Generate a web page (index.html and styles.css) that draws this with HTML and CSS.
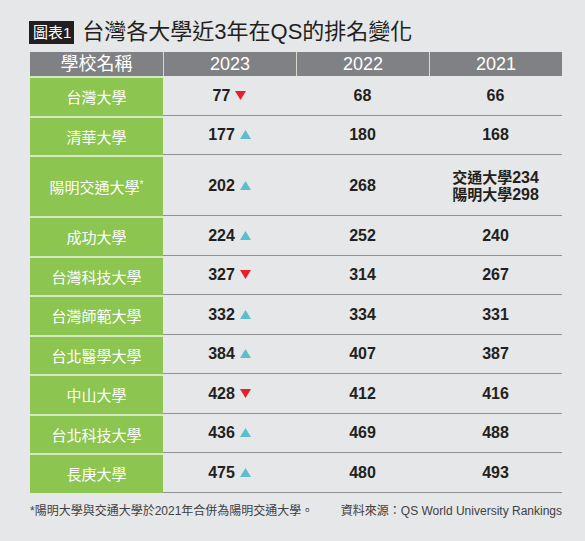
FILE: index.html
```html
<!DOCTYPE html>
<html lang="zh-Hant">
<head>
<meta charset="utf-8">
<link rel="stylesheet" href="styles.css">
</head>
<body>
<div class="page">
  <div class="title">
    <span class="tag">圖表1</span>
    <h1 class="heading">台灣各大學近3年在QS的排名變化</h1>
  </div>
  <div class="table">
    <div class="row head">
      <div class="hcell">學校名稱</div>
      <div class="hcell">2023</div>
      <div class="hcell">2022</div>
      <div class="hcell">2021</div>
    </div>
    <div class="row">
      <div class="name">台灣大學</div>
      <div class="cell">77<svg class="tri" viewBox="0 0 11 9"><polygon class="down" points="0,0 11,0 5.5,9"/></svg></div>
      <div class="cell">68</div>
      <div class="cell">66</div>
    </div>
    <div class="row">
      <div class="name">清華大學</div>
      <div class="cell">177<svg class="tri" viewBox="0 0 11 9"><polygon class="up" points="5.5,0 11,9 0,9"/></svg></div>
      <div class="cell">180</div>
      <div class="cell">168</div>
    </div>
    <div class="row tall">
      <div class="name">陽明交通大學<sup class="star">*</sup></div>
      <div class="cell">202<svg class="tri" viewBox="0 0 11 9"><polygon class="up" points="5.5,0 11,9 0,9"/></svg></div>
      <div class="cell">268</div>
      <div class="cell multi"><span>交通大學<span class="num">234</span></span><span>陽明大學<span class="num">298</span></span></div>
    </div>
    <div class="row">
      <div class="name">成功大學</div>
      <div class="cell">224<svg class="tri" viewBox="0 0 11 9"><polygon class="up" points="5.5,0 11,9 0,9"/></svg></div>
      <div class="cell">252</div>
      <div class="cell">240</div>
    </div>
    <div class="row">
      <div class="name">台灣科技大學</div>
      <div class="cell">327<svg class="tri" viewBox="0 0 11 9"><polygon class="down" points="0,0 11,0 5.5,9"/></svg></div>
      <div class="cell">314</div>
      <div class="cell">267</div>
    </div>
    <div class="row">
      <div class="name">台灣師範大學</div>
      <div class="cell">332<svg class="tri" viewBox="0 0 11 9"><polygon class="up" points="5.5,0 11,9 0,9"/></svg></div>
      <div class="cell">334</div>
      <div class="cell">331</div>
    </div>
    <div class="row">
      <div class="name">台北醫學大學</div>
      <div class="cell">384<svg class="tri" viewBox="0 0 11 9"><polygon class="up" points="5.5,0 11,9 0,9"/></svg></div>
      <div class="cell">407</div>
      <div class="cell">387</div>
    </div>
    <div class="row">
      <div class="name">中山大學</div>
      <div class="cell">428<svg class="tri" viewBox="0 0 11 9"><polygon class="down" points="0,0 11,0 5.5,9"/></svg></div>
      <div class="cell">412</div>
      <div class="cell">416</div>
    </div>
    <div class="row">
      <div class="name">台北科技大學</div>
      <div class="cell">436<svg class="tri" viewBox="0 0 11 9"><polygon class="up" points="5.5,0 11,9 0,9"/></svg></div>
      <div class="cell">469</div>
      <div class="cell">488</div>
    </div>
    <div class="row">
      <div class="name">長庚大學</div>
      <div class="cell">475<svg class="tri" viewBox="0 0 11 9"><polygon class="up" points="5.5,0 11,9 0,9"/></svg></div>
      <div class="cell">480</div>
      <div class="cell">493</div>
    </div>
  </div>
  <div class="footer">
    <span>*陽明大學與交通大學於2021年合併為陽明交通大學。</span>
    <span>資料來源：QS World University Rankings</span>
  </div>
</div>
</body>
</html>
```
FILE: styles.css
```css
html, body {
  margin: 0;
  padding: 0;
  background: #e6e7e8;
}
body {
  font-family: "Liberation Sans", "Noto Sans CJK TC", sans-serif;
  color: #231f20;
}
.page {
  width: 532px;
  padding: 20px 0 0 30px;
}
.title {
  display: flex;
  align-items: center;
  height: 24px;
  gap: 8px;
}
.tag {
  display: flex;
  align-items: center;
  height: 23px;
  padding: 0 3px 0 4px;
  margin-left: -1px;
  background: #231f20;
  color: #fff;
  font-size: 15px;
  line-height: 23px;
}
.heading {
  margin: 0;
  font-size: 22px;
  font-weight: normal;
  line-height: 24px;
  color: #231f20;
}
.table {
  margin-top: 8px;
}
.row {
  display: grid;
  grid-template-columns: repeat(4, 133px);
  height: 39.5px;
}
.row.tall {
  height: 61px;
}
.row.head {
  height: 24px;
  background: #808184;
}
.hcell {
  color: #fff;
  font-size: 18px;
  line-height: 24px;
  text-align: center;
  border-left: 1px solid #d3dcc8;
}
.hcell:first-child {
  border-left: none;
}
.name {
  display: flex;
  align-items: center;
  justify-content: center;
  background: #8cc54f;
  border-top: 2px solid #d4e8c0;
  color: #fff;
  font-size: 15px;
}
.star {
  font-size: 10px;
  vertical-align: top;
  line-height: 1;
  margin-top: -4px;
}
.cell {
  display: flex;
  align-items: center;
  justify-content: center;
  gap: 5px;
  padding-top: 1px;
  border-bottom: 1.5px solid #909193;
  font-size: 16px;
  font-weight: bold;
  color: #231f20;
}
.cell.multi {
  flex-direction: column;
  gap: 0;
  font-size: 15px;
  line-height: 17px;
}
.num {
  font-family: "Liberation Sans", sans-serif;
  font-size: 16px;
}
.tri {
  width: 11px;
  height: 9px;
  margin-top: -1px;
}
.up {
  fill: #5bbdcd;
}
.down {
  fill: #e5202a;
}
.footer {
  display: flex;
  justify-content: space-between;
  margin-top: 11px;
  font-size: 12px;
  line-height: 14px;
  color: #414042;
}
```
